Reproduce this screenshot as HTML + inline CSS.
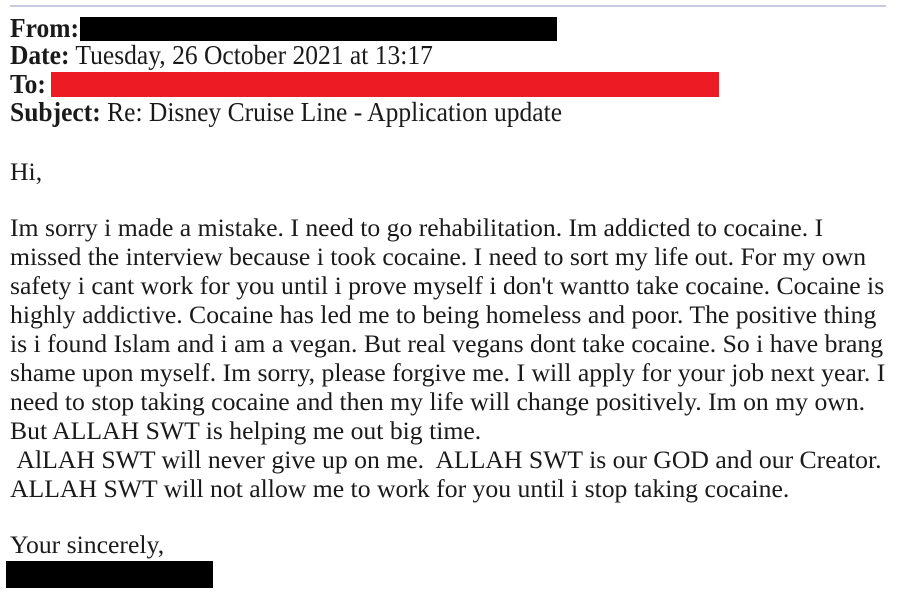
<!DOCTYPE html>
<html><head><meta charset="utf-8"><style>
body{margin:0;width:898px;height:603px;background:#fff;position:relative;overflow:hidden;font-family:"Liberation Serif",serif;color:#1a1a1a}
.l{position:absolute;left:10px;white-space:nowrap;font-size:25.7px;line-height:28px;height:28px}
.h{font-size:27px;transform-origin:0 50%;transform:scaleX(0.945)}
b{font-weight:bold}
.box{position:absolute}
</style></head><body>
<div class="box" style="left:10px;top:5px;width:876px;height:2px;background:#c8cbe0"></div>
<div class="l h" style="top:14px"><b>From:</b></div>
<div class="box" style="left:80px;top:17px;width:477px;height:24px;background:#000"></div>
<div class="l h" style="top:41px"><b>Date:</b> Tuesday, 26 October 2021 at 13:17</div>
<div class="l h" style="top:70px"><b>To:</b></div>
<div class="box" style="left:51px;top:72px;width:668px;height:25px;background:#ed1c24"></div>
<div class="l h" style="top:98px"><b>Subject:</b> Re: Disney Cruise Line - Application update</div>
<div class="l" style="top:158px">Hi,</div>
<div class="l" style="top:214px">Im sorry i made a mistake. I need to go rehabilitation. Im addicted to cocaine. I</div>
<div class="l" style="top:243px">missed the interview because i took cocaine. I need to sort my life out. For my own</div>
<div class="l" style="top:272px">safety i cant work for you until i prove myself i don't wantto take cocaine. Cocaine is</div>
<div class="l" style="top:301px">highly addictive. Cocaine has led me to being homeless and poor. The positive thing</div>
<div class="l" style="top:330px">is i found Islam and i am a vegan. But real vegans dont take cocaine. So i have brang</div>
<div class="l" style="top:359px">shame upon myself. Im sorry, please forgive me. I will apply for your job next year. I</div>
<div class="l" style="top:388px">need to stop taking cocaine and then my life will change positively. Im on my own.</div>
<div class="l" style="top:417px">But ALLAH SWT is helping me out big time.</div>
<div class="l" style="top:446px">&nbsp;AlLAH SWT will never give up on me.&nbsp; ALLAH SWT is our GOD and our Creator.</div>
<div class="l" style="top:475px">ALLAH SWT will not allow me to work for you until i stop taking cocaine.</div>
<div class="l" style="top:531px">Your sincerely,</div>
<div class="box" style="left:6px;top:561px;width:207px;height:27px;background:#000"></div>
</body></html>
